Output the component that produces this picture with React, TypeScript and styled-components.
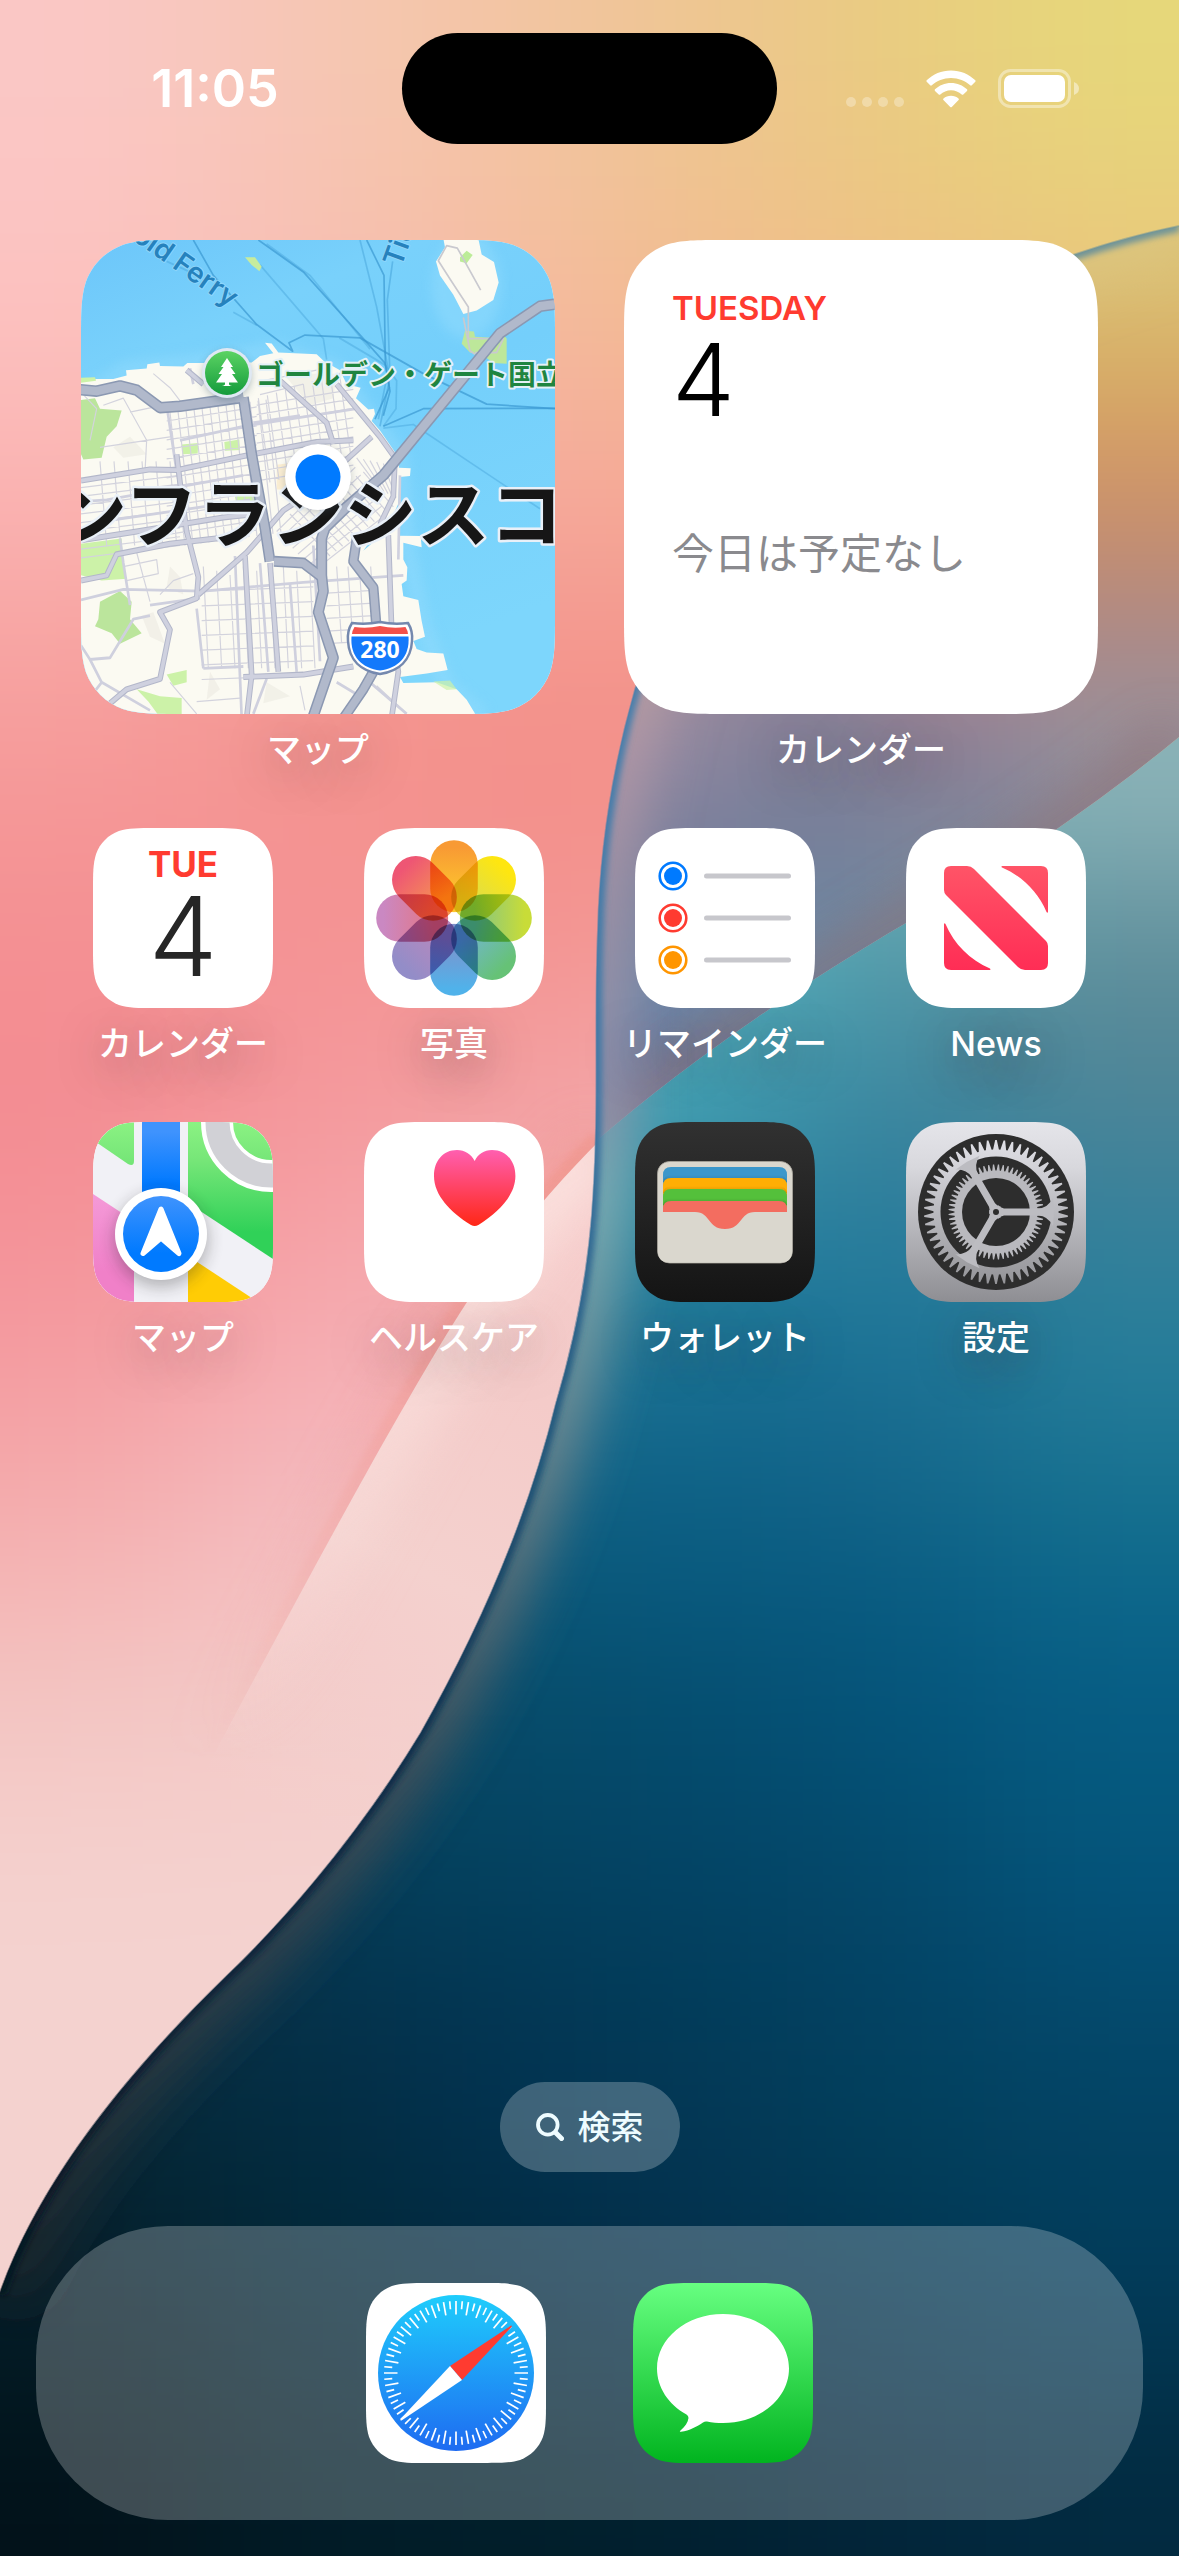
import React from "react";
import styled, { createGlobalStyle } from "styled-components";

const FONT = `"Inter", "Noto Sans CJK JP", sans-serif`;

const GlobalStyle = createGlobalStyle`
  *, *::before, *::after { box-sizing: border-box; }
  html, body { margin: 0; padding: 0; }
  body { font-family: ${FONT}; background: #02202e; -webkit-font-smoothing: antialiased; }
  button { font: inherit; color: inherit; border: 0; padding: 0; margin: 0; background: none; cursor: pointer; }
`;

/* Continuous-corner rounded rectangle */
function smoothRect(w: number, h: number, r: number): string {
  const a = r * 1.5287, b = r * 1.0885, c = r * 0.8684, d = r * 0.6315;
  const e = r * 0.3728, f = r * 0.1691, g = r * 0.0749;
  return [
    `M${a} 0H${w - a}`,
    `C${w - b} 0 ${w - c} 0 ${w - d} ${g}`,
    `C${w - e} ${f} ${w - f} ${e} ${w - g} ${d}`,
    `C${w} ${c} ${w} ${b} ${w} ${a}`,
    `V${h - a}`,
    `C${w} ${h - b} ${w} ${h - c} ${w - g} ${h - d}`,
    `C${w - f} ${h - e} ${w - e} ${h - f} ${w - d} ${h - g}`,
    `C${w - c} ${h} ${w - b} ${h} ${w - a} ${h}`,
    `H${a}`,
    `C${b} ${h} ${c} ${h} ${d} ${h - g}`,
    `C${e} ${h - f} ${f} ${h - e} ${g} ${h - d}`,
    `C0 ${h - c} 0 ${h - b} 0 ${h - a}`,
    `V${a}`,
    `C0 ${b} 0 ${c} ${g} ${d}`,
    `C${f} ${e} ${e} ${f} ${d} ${g}`,
    `C${c} 0 ${b} 0 ${a} 0Z`,
  ].join("");
}

/* ---------- page structure ---------- */

const Screen = styled.div`
  position: relative;
  isolation: isolate;
  overflow: hidden;
  min-height: 100vh;
  display: flex;
  flex-direction: column;
  padding-bottom: 36px;
`;

const WallpaperSvg = styled.svg`
  position: absolute;
  inset: 0;
  width: 100%;
  height: 100%;
  z-index: -1;
`;

const StatusBar = styled.header`
  display: grid;
  grid-template-columns: 1fr 375px 1fr;
  align-items: center;
  padding: 33px 28px 0;
  color: #fff;
`;

const Clock = styled.time`
  text-align: center;
  font-size: 52px;
  line-height: 60px;
  font-weight: 600;
`;

const Island = styled.div`
  height: 111px;
  border-radius: 56px;
  background: #000;
`;

const Indicators = styled.div`
  display: flex;
  justify-content: center;
  align-items: center;
  gap: 22px;
  padding-right: 4px;
`;

const Main = styled.main`
  display: flex;
  flex-direction: column;
  gap: 58px;
  padding-top: 96px;
`;

const WidgetRow = styled.section`
  display: flex;
  justify-content: space-between;
  padding: 0 81px;
`;

const AppGrid = styled.section`
  display: grid;
  grid-template-columns: repeat(4, 180px);
  justify-content: space-between;
  row-gap: 58px;
  padding: 0 93px;
`;

const Launcher = styled.button`
  display: flex;
  flex-direction: column;
  align-items: center;
  gap: 16px;
`;

const Label = styled.span`
  font-size: 34px;
  line-height: 40px;
  font-weight: 500;
  color: #fff;
  white-space: nowrap;
  text-shadow: 0 10px 44px rgba(70, 40, 50, 0.6);
`;

const Tile = styled.span<{ $bg?: string }>`
  display: block;
  width: 180px;
  height: 180px;
  background: ${(p) => p.$bg ?? "#fff"};
  clip-path: path("${smoothRect(180, 180, 41)}");

  svg { display: block; width: 100%; height: 100%; }
`;

const WidgetFace = styled.span`
  display: block;
  width: 474px;
  height: 474px;
  background: #fff;
  text-align: left;
  clip-path: path("${smoothRect(474, 474, 66)}");

  svg { display: block; }
`;

const DayWidget = styled.span`
  display: flex;
  flex-direction: column;
  padding: 48px;
`;

const Weekday = styled.span`
  font-size: 33px;
  line-height: 40px;
  font-weight: 600;
  color: #ff3b30;
`;

const DayNumber = styled.span`
  font-size: 100px;
  line-height: 104px;
  font-weight: 300;
  color: #000;
`;

const NoEvents = styled.span`
  margin-top: 92px;
  font-size: 42px;
  line-height: 60px;
  color: #8a8a8e;
`;

const CalendarFace = styled.span`
  display: flex;
  flex-direction: column;
  align-items: center;
  padding-top: 16px;
`;

const ShortDay = styled.span`
  font-size: 35px;
  line-height: 40px;
  font-weight: 700;
  color: #ff3b30;
`;

const BigDay = styled.span`
  font-size: 110px;
  line-height: 104px;
  font-weight: 300;
  color: #262626;
`;

const Bottom = styled.footer`
  margin-top: auto;
  display: flex;
  flex-direction: column;
  align-items: center;
  gap: 54px;
  padding: 0 36px;
`;

const SearchPill = styled.button`
  display: flex;
  align-items: center;
  justify-content: center;
  gap: 14px;
  width: 180px;
  height: 90px;
  border-radius: 45px;
  background: rgba(255, 255, 255, 0.24);
  color: #eefcff;
  font-size: 33px;
  line-height: 40px;
  font-weight: 500;
`;

const Dock = styled.nav`
  align-self: stretch;
  display: flex;
  justify-content: center;
  align-items: center;
  gap: 87px;
  height: 294px;
  border-radius: 132px;
  background: rgba(255, 255, 255, 0.24);
`;

/* ---------- wallpaper ---------- */

type FieldProps = { x: number; y: number; w: number; h: number; rows: string[]; blur: string };

/* A soft colour field: a coarse grid of swatches, blurred into each other */
function ColorField({ x, y, w, h, rows, blur }: FieldProps) {
  const rects: React.ReactNode[] = [];
  rows.forEach((row, j) => {
    const colors = row.split(" ");
    colors.forEach((c, i) => {
      const left = i === 0 ? x - 300 : x + i * w;
      const right = i === colors.length - 1 ? x + (i + 1) * w + 300 : x + (i + 1) * w + 1;
      const top = j === 0 ? y - 300 : y + j * h;
      const bottom = j === rows.length - 1 ? y + (j + 1) * h + 300 : y + (j + 1) * h + 1;
      rects.push(
        <rect key={`${i}-${j}`} x={left} y={top} width={right - left} height={bottom - top} fill={`#${c}`} />
      );
    });
  });
  return <g filter={`url(#${blur})`}>{rects}</g>;
}

const EDGE =
  "M1179 226C1140 234 1105 244 1073 255C850 335 690 500 635 690C612 770 600 850 598 930C594 1030 600 1110 592 1215C586 1290 572 1350 556 1404C530 1510 485 1620 421 1733C350 1850 270 1935 226 1977C130 2070 40 2180 0 2293";
const RIDGE = "M1179 737C1090 810 1000 870 906 923C800 985 690 1060 596 1141";
const LEFT_RIDGE = "M600 1140C550 1190 505 1245 467 1302C400 1405 280 1630 190 1800";

const ROSE = [
  "fac7c5 f6c6b5 f3c5a5 eec592 e9cb80 e6d77a",
  "fcc2c0 f8bfb4 f5bba2 f1bc8f eec084 e9c57c",
  "fab2b1 f8aca8 f6aa9d f4a897 f0b088 e9c07c",
  "f69f9d f3948f f29089 f48f89 f0a088 e9b07c",
  "f49193 f49293 f3928f f2938f f2938f f2938f",
  "f38b91 f4979b f39ea0 f2a8aa f2a8aa f2a8aa",
  "f4969c f5a7ac f4aeb3 f3b4b8 f3b4b8 f3b4b8",
  "f4abac f4bbbf f3bac2 f3c0c6 f3c0c6 f3c0c6",
  "f3c5c2 f3cac8 f4cfcc f4cfcc f4cfcc f4cfcc",
  "f4d2cf f4d2cf f4d2cf f4d2cf f4d2cf f4d2cf",
  "f4d2cf f4d2cf f4d2cf f4d2cf f4d2cf f4d2cf",
  "f4d2cf f4d2cf f4d2cf f4d2cf f4d2cf f4d2cf",
];

const DUSK = [
  "e0c880 e0c880 dec87c dcc478",
  "d8b878 d9b674 dab56c d8b268",
  "d0a078 d0a070 d69f66 d39a66",
  "b89088 b89084 c6906f c28c72",
  "a08c9c 988498 ac8890 a88a8c",
  "9088a0 7e7f98 8b7f96 96919b",
  "787e9b 757f9a 7c869a 868f9f",
  "7284a2 6c88a2 7090a4 809aa8",
  "6a86aa 5f8aac 6a90a8 6a90a8",
  "7c82a8 7c82a8 7c82a8 7c82a8",
];

const OCEAN = [
  "6fb8be 6fb8be 6fb8be 6fb8be 7ab4ba 8ab2b7",
  "6fb8be 6fb8be 6fb8be 62b4bd 60a4b0 6c9aa4",
  "60b4be 60b4be 60b4be 4dacbb 4b94a6 598a98",
  "4fa8b6 4fa8b6 4fa8b6 409db1 3b869f 4c8598",
  "3a90a6 3a90a6 3a90a6 328ca4 2c7c9b 3a819a",
  "30809a 30809a 30809a 20799a 20789a 2c7f9a",
  "20708f 20708f 20708f 146b8f 196c90 227a98",
  "0f6082 0f6082 0f6082 0d6085 126489 15708f",
  "0a5576 0a5576 0a5576 08587c 085a80 0c668a",
  "064c6a 064c6a 064c6a 054e70 05547a 065c84",
  "05445f 05445f 064664 04486a 044e72 05597d",
  "043a55 043a55 033f5c 034263 044768 04527a",
  "0a3246 06324a 033653 023c59 034264 044a6c",
  "062a3a 032c42 023250 033856 02405c 034466",
  "06222f 022a3c 022d46 033350 023a56 023f5e",
  "041d29 022534 022a40 022e48 02344f 023a58",
  "02171f 021f2b 022433 02283c 022c44 023149",
  "02121a 011b26 011e29 01202f 022539 022a40",
];

function Wallpaper() {
  return (
    <WallpaperSvg viewBox="0 0 1179 2556" preserveAspectRatio="none" aria-hidden="true">
      <defs>
        <filter id="soft" filterUnits="userSpaceOnUse" x="-300" y="-300" width="1779" height="3156" colorInterpolationFilters="sRGB">
          <feGaussianBlur stdDeviation="92" />
        </filter>
        <filter id="softSmall" filterUnits="userSpaceOnUse" x="300" y="0" width="1100" height="1500" colorInterpolationFilters="sRGB">
          <feGaussianBlur stdDeviation="50" />
        </filter>
        <filter id="softSea" filterUnits="userSpaceOnUse" x="-300" y="450" width="1779" height="2500" colorInterpolationFilters="sRGB">
          <feGaussianBlur stdDeviation="84 60" />
        </filter>
        <filter id="glow" filterUnits="userSpaceOnUse" x="-200" y="-100" width="1579" height="2756">
          <feGaussianBlur stdDeviation="26" />
        </filter>
        <filter id="thin" filterUnits="userSpaceOnUse" x="-200" y="-100" width="1579" height="2756">
          <feGaussianBlur stdDeviation="3" />
        </filter>
        <clipPath id="fold"><path d={`${EDGE}V2556H1179Z`} /></clipPath>
        <clipPath id="sea"><path d={`${RIDGE}L400 1310L-20 1700V2556H1179Z`} /></clipPath>
        <clipPath id="dusk"><path d={`${RIDGE}L500 1225V200H1179Z`} /></clipPath>
        <clipPath id="leftTop"><path d={`${LEFT_RIDGE}H0V900H700Z`} /></clipPath>
        <clipPath id="leftLow"><path d={`${LEFT_RIDGE}V2300H700V1140Z`} /></clipPath>
        <linearGradient id="pale" gradientUnits="userSpaceOnUse" x1="560" y1="1180" x2="260" y2="1800">
          <stop offset="0" stopColor="#f6cccb" />
          <stop offset="0.3" stopColor="#f4cbc9" />
          <stop offset="0.6" stopColor="#f4d1ce" />
          <stop offset="1" stopColor="#f4d2cf" stopOpacity="0" />
        </linearGradient>
        <linearGradient id="fadeDown" gradientUnits="userSpaceOnUse" x1="0" y1="1140" x2="0" y2="1760">
          <stop offset="0" stopColor="#fff" />
          <stop offset="0.45" stopColor="#fff" stopOpacity="0.6" />
          <stop offset="1" stopColor="#fff" stopOpacity="0" />
        </linearGradient>
        <mask id="fadeMask" maskUnits="userSpaceOnUse" x="0" y="0" width="1179" height="2556">
          <rect width="1179" height="2556" fill="url(#fadeDown)" />
        </mask>
        <linearGradient id="edgeLine" gradientUnits="userSpaceOnUse" x1="0" y1="226" x2="0" y2="2293">
          <stop offset="0" stopColor="#6f9498" />
          <stop offset="0.2" stopColor="#4a80ac" />
          <stop offset="0.42" stopColor="#3f78a6" />
          <stop offset="0.6" stopColor="#1f5478" />
          <stop offset="0.75" stopColor="#0c2c48" />
          <stop offset="1" stopColor="#06141f" />
        </linearGradient>
        <linearGradient id="edgeHaze" gradientUnits="userSpaceOnUse" x1="0" y1="226" x2="0" y2="2293">
          <stop offset="0" stopColor="#e0cc88" stopOpacity="0.4" />
          <stop offset="0.25" stopColor="#b498a6" stopOpacity="0.9" />
          <stop offset="0.42" stopColor="#9490a8" stopOpacity="0.8" />
          <stop offset="0.47" stopColor="#8fb4b6" stopOpacity="0.8" />
          <stop offset="0.58" stopColor="#7f8f92" stopOpacity="0.8" />
          <stop offset="0.75" stopColor="#4c5056" stopOpacity="0.8" />
          <stop offset="1" stopColor="#302e2e" stopOpacity="0.5" />
        </linearGradient>
      </defs>

      <ColorField x={0} y={0} w={197} h={200} rows={ROSE} blur="soft" />
      <g clipPath="url(#leftLow)">
        <rect y="1100" width="700" height="900" fill="url(#pale)" />
        <g mask="url(#fadeMask)">
          <path d={LEFT_RIDGE} fill="none" stroke="#fbe2df" strokeWidth="70" filter="url(#glow)" />
        </g>
      </g>
      <g clipPath="url(#leftTop)" mask="url(#fadeMask)">
        <path d={LEFT_RIDGE} fill="none" stroke="#ee8c7c" strokeWidth="22" filter="url(#thin)" opacity="0.35" />
        <path d={LEFT_RIDGE} fill="none" stroke="#ee8c7c" strokeWidth="30" filter="url(#glow)" opacity="0.5" />
      </g>

      <g clipPath="url(#fold)">
        <g clipPath="url(#dusk)">
          <ColorField x={590} y={200} w={147} h={100} rows={DUSK} blur="softSmall" />
          <path d={RIDGE} fill="none" stroke="#90686c" strokeWidth="36" filter="url(#glow)" opacity="0.7" />
        </g>
        <g clipPath="url(#sea)">
          <ColorField x={0} y={750} w={197} h={100} rows={OCEAN} blur="softSea" />
        </g>
        <path d={EDGE} fill="none" stroke="url(#edgeHaze)" strokeWidth="70" filter="url(#glow)" />
        <path d={EDGE} fill="none" stroke="url(#edgeLine)" strokeWidth="11" filter="url(#thin)" />
      </g>
      <path d={EDGE} fill="none" stroke="url(#edgeLine)" strokeWidth="2" opacity="0.5" />
    </WallpaperSvg>
  );
}

/* ---------- status icons ---------- */

function SignalDots() {
  return (
    <svg width="58" height="40" viewBox="0 0 58 40" aria-hidden="true">
      {[5, 21, 37, 53].map((x) => <circle key={x} cx={x} cy="33" r="5" fill="#fff" opacity="0.3" />)}
    </svg>
  );
}

function WifiIcon() {
  return (
    <svg width="50" height="38" viewBox="0 0 50 38" role="img" aria-label="Wi-Fi">
      <g fill="#fff">
        <path d="M25 0.500C34.500 0.500 43 4.200 49.300 10.300Q50 11 49.300 11.800L45.800 15.300Q45 16 44.200 15.300C39.200 10.700 32.500 7.900 25 7.900C17.500 7.900 10.800 10.700 5.800 15.300Q5 16 4.200 15.300L0.700 11.800Q0 11 0.700 10.300C7 4.200 15.500 0.500 25 0.500Z" />
        <path d="M25 13C31.200 13 36.800 15.400 41 19.300Q41.800 20.100 41 20.900L37.300 24.500Q36.500 25.200 35.700 24.500C32.900 21.900 29.100 20.300 25 20.300C20.900 20.300 17.100 21.900 14.300 24.500Q13.500 25.200 12.700 24.500L9 20.900Q8.200 20.100 9 19.300C13.200 15.400 18.800 13 25 13Z" />
        <path d="M25 25.700C27.900 25.700 30.500 26.700 32.500 28.400Q33.400 29.200 32.600 30L25.800 36.900Q25 37.700 24.200 36.900L17.400 30Q16.600 29.200 17.500 28.400C19.500 26.700 22.100 25.700 25 25.700Z" />
      </g>
    </svg>
  );
}

function BatteryIcon() {
  return (
    <svg width="81" height="39" viewBox="0 0 81 39" role="img" aria-label="Battery">
      <rect x="1.500" y="1.500" width="70" height="36" rx="11" fill="none" stroke="#fff" strokeWidth="3" opacity="0.4" />
      <rect x="6" y="6" width="61" height="27" rx="7" fill="#fff" />
      <path d="M76 13Q81 15 81 19.500T76 26Z" fill="#fff" opacity="0.45" />
    </svg>
  );
}

/* ---------- app icons ---------- */

const Petal = styled.g`
  mix-blend-mode: multiply;
`;

const PETALS: [string, string][] = [
  ["#f89a34", "#fdc72e"],
  ["#fee610", "#dadc50"],
  ["#c8dc38", "#84c584"],
  ["#66c276", "#72b6d0"],
  ["#50b2ea", "#8091cb"],
  ["#938dc8", "#b888bd"],
  ["#ca88c2", "#e47684"],
  ["#ee5674", "#f69552"],
];

function PhotosIcon() {
  return (
    <svg viewBox="0 0 180 180" aria-hidden="true">
      <defs>
        {PETALS.map(([outer, inner], i) => (
          <linearGradient key={i} id={`petal${i}`} x1="0" y1="0" x2="0" y2="1">
            <stop offset="0.1" stopColor={outer} />
            <stop offset="0.8" stopColor={inner} />
          </linearGradient>
        ))}
      </defs>
      <rect width="180" height="180" fill="#fff" />
      {PETALS.map((_, i) => (
        <Petal key={i} transform={`rotate(${i * 45} 90 90)`}>
          <rect x="66.200" y="12.200" width="47.600" height="72" rx="23.800" fill={`url(#petal${i})`} />
        </Petal>
      ))}
      <circle cx="90" cy="90" r="5.500" fill="#fff" />
    </svg>
  );
}

function RemindersIcon() {
  return (
    <svg viewBox="0 0 180 180" aria-hidden="true">
      {["#007aff", "#ff3b30", "#ff9500"].map((c, i) => {
        const y = 48 + i * 42;
        return (
          <g key={c}>
            <circle cx="38" cy={y} r="13.300" fill="none" stroke={c} strokeWidth="2.600" />
            <circle cx="38" cy={y} r="9" fill={c} />
            <path d={`M71.500 ${y}H153.500`} stroke="#c7c7cc" strokeWidth="5" strokeLinecap="round" />
          </g>
        );
      })}
    </svg>
  );
}

function NewsIcon() {
  return (
    <svg viewBox="0 0 180 180" aria-hidden="true">
      <defs>
        <linearGradient id="news" gradientUnits="userSpaceOnUse" x1="0" y1="38" x2="0" y2="142">
          <stop offset="0" stopColor="#ff5467" />
          <stop offset="1" stopColor="#ff2d55" />
        </linearGradient>
      </defs>
      <g fill="url(#news)">
        <path d="M45 38H61Q65 38 68 41L140 113Q142 115 142 118V135Q142 142 135 142H119Q115 142 112 139L40 67Q38 65 38 62V45Q38 38 45 38Z" />
        <path d="M96 38H135Q142 38 142 45V84Q141.500 85.500 140.500 84C132 64 116 48 96 39.500Q95 38.500 96 38Z" />
        <path d="M84 142H45Q38 142 38 135V96Q38.500 94.500 39.500 96C48 116 64 132 84 140.500Q85 141.500 84 142Z" />
      </g>
    </svg>
  );
}

function MapsIcon() {
  return (
    <svg viewBox="0 0 180 180" aria-hidden="true">
      <defs>
        <linearGradient id="mGreen" gradientUnits="userSpaceOnUse" x1="0" y1="0" x2="0" y2="110">
          <stop offset="0" stopColor="#8bf283" />
          <stop offset="0.35" stopColor="#76e678" />
          <stop offset="1" stopColor="#30d158" />
        </linearGradient>
        <linearGradient id="mBlue" gradientUnits="userSpaceOnUse" x1="0" y1="0" x2="0" y2="66">
          <stop offset="0.15" stopColor="#3f93fd" />
          <stop offset="0.95" stopColor="#0079ff" />
        </linearGradient>
        <linearGradient id="mDisc" gradientUnits="userSpaceOnUse" x1="0" y1="74" x2="0" y2="150">
          <stop offset="0" stopColor="#3f93fd" />
          <stop offset="0.75" stopColor="#007aff" />
        </linearGradient>
        <linearGradient id="mPink" gradientUnits="userSpaceOnUse" x1="0" y1="72" x2="0" y2="150">
          <stop offset="0" stopColor="#f49ad8" />
          <stop offset="1" stopColor="#f080c8" />
        </linearGradient>
        <filter id="mShadow" x="-40%" y="-40%" width="180%" height="180%">
          <feGaussianBlur stdDeviation="8" />
        </filter>
        <clipPath id="mRight"><path d="M95 0H180V137L95 81Z" /></clipPath>
      </defs>
      <rect width="180" height="180" fill="#f1f1f6" />
      <path d="M0 18V0H41V39Q41 45 35 42Z" fill="url(#mGreen)" />
      <path d="M0 72L41 99V180H0Z" fill="url(#mPink)" />
      <path d="M95 134L165 180H95Z" fill="#ffcc05" />
      <path d="M95 0H180V137L95 81Z" fill="url(#mGreen)" />
      <g clipPath="url(#mRight)" fill="none">
        <circle cx="178" cy="0" r="54" stroke="#fff" strokeWidth="32" />
        <circle cx="178" cy="0" r="53.500" stroke="#d1d1d6" strokeWidth="24" />
      </g>
      <rect x="49" width="38" height="90" fill="url(#mBlue)" />
      <circle cx="68" cy="118" r="47" fill="#222" opacity="0.3" filter="url(#mShadow)" />
      <circle cx="68" cy="112" r="46" fill="#fff" />
      <circle cx="68" cy="112" r="38" fill="url(#mDisc)" />
      <path d="M68 87L50 131.500L68 116L86 131.500Z" fill="#fff" stroke="#fff" strokeWidth="5" strokeLinejoin="round" />
    </svg>
  );
}

function HealthIcon() {
  return (
    <svg viewBox="0 0 180 180" aria-hidden="true">
      <defs>
        <linearGradient id="heart" gradientUnits="userSpaceOnUse" x1="0" y1="28" x2="0" y2="104">
          <stop offset="0" stopColor="#ff5fb0" />
          <stop offset="1" stopColor="#ff2716" />
        </linearGradient>
      </defs>
      <path
        d="M110.700 39C107 32 101 28 93 28C79 28 70 39 70 54C70 73 86 90 107 103Q110.700 105 114.400 103C135 90 151.400 73 151.400 54C151.400 39 142 28 128 28C120 28 114 32 110.700 39Z"
        fill="url(#heart)"
      />
    </svg>
  );
}

function WalletIcon() {
  const cards = [["#3b97cb", 45], ["#ffae04", 56], ["#54c03b", 67], ["#f36d60", 79]] as const;
  return (
    <svg viewBox="0 0 180 180" aria-hidden="true">
      <defs>
        <linearGradient id="wShade" x1="0" y1="0" x2="0" y2="1">
          <stop offset="0" stopColor="#000" stopOpacity="0" />
          <stop offset="1" stopColor="#000" stopOpacity="0.35" />
        </linearGradient>
      </defs>
      <rect x="22.500" y="39.500" width="135" height="101.500" rx="12" fill="#dad7ce" stroke="#a9a69d" strokeWidth="0.800" />
      {cards.map(([c, y], i) => (
        <g key={c}>
          {i > 0 && <path d={`M28 ${y + 4}Q29 ${y - 3} 36 ${y - 3}H144Q151 ${y - 3} 152 ${y + 4}Z`} fill="url(#wShade)" opacity="0.5" />}
          <path d={`M28 ${y + 8}Q28 ${y} 36 ${y}H144Q152 ${y} 152 ${y + 8}V112H28Z`} fill={c} />
        </g>
      ))}
      <path d="M23 90H60C76 90 72 107 90 107C108 107 104 90 120 90H157V129Q157 140.500 145.500 140.500H34.500Q23 140.500 23 129Z" fill="#dad7ce" />
    </svg>
  );
}

function gearPath(n: number, tip: number, base: number, tipHalf: number, baseHalf: number): string {
  let d = "";
  for (let i = 0; i < n; i++) {
    const mid = ((i + 0.5) / n) * Math.PI * 2;
    const pts: [number, number][] = [[base, -baseHalf], [tip, -tipHalf], [tip, tipHalf], [base, baseHalf]];
    pts.forEach(([r, off], k) => {
      const a = mid + off / r;
      d += `${i === 0 && k === 0 ? "M" : "L"}${(90 + r * Math.cos(a)).toFixed(2)} ${(90 + r * Math.sin(a)).toFixed(2)}`;
    });
  }
  return d + "Z";
}

function SettingsIcon() {
  return (
    <svg viewBox="0 0 180 180" aria-hidden="true">
      <defs>
        <linearGradient id="metal" gradientUnits="userSpaceOnUse" x1="0" y1="18" x2="0" y2="162">
          <stop offset="0" stopColor="#e0e0e6" />
          <stop offset="1" stopColor="#949498" />
        </linearGradient>
      </defs>
      <circle cx="90" cy="90" r="78" fill="#2d2d2d" />
      <path d={gearPath(54, 72, 62.5, 0.8, 2.9)} fill="url(#metal)" />
      <circle cx="90" cy="90" r="55.500" fill="#2d2d2d" />
      <path d={gearPath(60, 47.500, 41.500, 0.6, 1.6)} fill="#b9b9be" />
      <circle cx="90" cy="90" r="34" fill="#2d2d2d" />
      {[0, 120, 240].map((a) => (
        <g key={a} transform={`rotate(${a} 90 90)`} fill="#bcbcc1">
          <path d="M98 86.500H132Q142 86 147 76L148 90L147 104Q142 94 132 93.500H98Q94 94 92 97L88 90L92 83Q94 86 98 86.500Z" />
        </g>
      ))}
      <circle cx="90" cy="90" r="6" fill="#bcbcc1" />
      <circle cx="90" cy="90" r="3" fill="#2d2d2d" />
    </svg>
  );
}

function SafariIcon() {
  return (
    <svg viewBox="0 0 180 180" aria-hidden="true">
      <defs>
        <linearGradient id="safari" x1="0" y1="0" x2="0" y2="1">
          <stop offset="0" stopColor="#1fcdfc" />
          <stop offset="1" stopColor="#1e6bf1" />
        </linearGradient>
      </defs>
      <circle cx="90" cy="90" r="78" fill="url(#safari)" />
      <g stroke="#fff" strokeWidth="1.700">
        {Array.from({ length: 72 }, (_, i) => (
          <path key={i} d={i % 2 === 0 ? "M90 18V31.500" : "M90 18V26"} transform={`rotate(${i * 5} 90 90)`} />
        ))}
      </g>
      <path d="M84 83L145 42.500Q146.300 42.500 145.500 44L96 97Z" fill="#ff3b30" />
      <path d="M84 83L34.500 136Q34 138 35.500 137.500L96 97Z" fill="#fff" />
    </svg>
  );
}

function MessagesIcon() {
  return (
    <svg viewBox="0 0 180 180" aria-hidden="true">
      <path
        d="M90 31C126.500 31 156 55.600 156 85.500C156 115.600 126.500 140 90 140C84.500 140 79 139.500 74 138.500Q72 138 70 139.500C63 144 57 147.500 48 148.800Q46 149 47.500 147.500C52 143.500 55 139.500 55.500 135Q55.500 132.500 53.500 131.500C35.500 121.500 24 104.500 24 85.500C24 55.600 53.500 31 90 31Z"
        fill="#fff"
      />
    </svg>
  );
}

function SearchGlyph() {
  return (
    <svg width="28" height="28" viewBox="0 0 28 28" fill="none" stroke="currentColor" strokeLinecap="round" aria-hidden="true">
      <circle cx="11.800" cy="11.800" r="9.800" strokeWidth="3.800" />
      <path d="M20 20L25.500 25.500" strokeWidth="5" />
    </svg>
  );
}

/* ---------- map widget ---------- */

const HIGHWAYS: [string, number][] = [
  ["M20 455L80 460L150 445L200 457L270 507L330 503L500 480L520 478", 30],
  ["M520 478L545 640L585 850L600 945", 30],
  ["M612 945L700 950L755 990", 28],
  ["M1470 210L1410 218L1290 295L940 700L830 790L765 850L755 880L755 985L760 1030L745 1090L790 1220L725 1400", 30],
  ["M862 870L850 945L910 1020L920 1140", 28],
  ["M910 1260L880 1310L815 1400", 28],
];

const ARTERIALS = [
  "M33 715L240 683L320 685L520 645L740 605L850 600",
  "M33 885L200 860L460 820L560 810",
  "M33 1000L110 985L140 925L300 895L530 870",
  "M320 640L330 720L350 860L385 990L380 1050L270 1090L300 1140L270 1280L170 1310L120 1350",
  "M385 1040L530 920L640 800L720 750",
  "M630 430L770 550L790 610",
  "M800 440L930 590L975 650L970 760L930 840",
  "M600 950L625 1260",
  "M525 930L545 1270L530 1390",
  "M520 1275L700 1268L850 1245",
  "M955 870L965 1140L985 1260L965 1390",
  "M720 750L905 590",
  "M350 400L400 440",
];

const STREETS = [
  "M33 1055L160 1025L400 1030L700 1005L1000 985",
  "M33 775L110 770L520 700",
  "M110 830L540 770",
  "M290 500L320 690",
  "M330 600L520 560L860 510",
  "M550 550L690 530",
  "M33 1185L60 1225L120 1220L190 1110L240 1100",
  "M60 1225L95 1290L30 1370M95 1290L240 1370",
  "M240 1070L390 1050",
  "M180 1070L160 950L150 880",
  "M360 395L370 440",
  "M730 900L750 1230",
  "M380 1080L400 1250M400 1250L520 1245",
  "M900 1290L1010 1380M800 1290L870 1330",
  "M590 1280L550 1380",
  "M990 700L985 940",
  "M495 930L515 1390",
  "M570 950L595 1260",
  "M660 1010L680 1260",
];

const FERRIES = [
  ["M370 29L430 130L560 270L668 346L657 322L705 300L870 308L1060 410L1250 497L1455 510", 0.7],
  ["M565 29L700 120L880 310L945 380L958 450L915 540", 0.7],
  ["M890 29L942 130L946 380L960 460L940 530", 0.7],
  ["M870 29L920 220L955 400L925 540", 0.4],
  ["M968 90L952 200L960 420L930 560", 0.45],
  ["M940 560L1060 510L1455 509", 0.7],
  ["M570 100L760 310L770 370", 0.35],
  ["M808 308L945 385L980 430L978 510L940 560", 0.35],
  ["M590 40L720 130L900 340", 0.35],
  ["M940 565L1030 555L1290 720L1410 795", 0.35],
  ["M490 235L560 272M290 90L360 120", 0.35],
] as const;

function streetGrid(): string {
  let d = "";
  for (let i = 0; i < 13; i++) d += `M${300 + i * 24} ${520 - i * 3}L${345 + i * 24} ${900 - i * 3}`;
  for (let i = 0; i < 14; i++) d += `M${290} ${545 + i * 27}L${560} ${505 + i * 27}`;
  for (let i = 0; i < 9; i++) d += `M${560} ${500 + i * 27}L${850} ${455 + i * 27}`;
  for (let i = 0; i < 10; i++) d += `M${565 + i * 27} ${480 - i * 8}L${600 + i * 27} ${720 - i * 8}`;
  for (let i = 0; i < 11; i++) d += `M${660 + i * 22} ${720 - i * 12 + 90}L${780 + i * 19} ${930 - i * 14}`;
  for (let i = 0; i < 8; i++) d += `M${620 + i * 16} ${860 + i * 16}L${840 + i * 16} ${655 + i * 22}`;
  for (let i = 0; i < 9; i++) d += `M${400 + i * 40} ${960 + (i % 3) * 12}L${415 + i * 40} 1250`;
  for (let i = 0; i < 7; i++) d += `M395 ${1030 + i * 42}L730 ${1018 + i * 42}`;
  for (let i = 0; i < 6; i++) d += `M770 ${1000 + i * 36}L910 ${992 + i * 36}`;
  for (let i = 0; i < 4; i++) d += `M${800 + i * 34} 960L${815 + i * 34} 1180`;
  for (let i = 0; i < 9; i++) d += `M33 ${735 + i * 25}L330 ${700 + i * 25}`;
  for (let i = 0; i < 6; i++) d += `M${90 + i * 42} 660L${110 + i * 42} 900`;
  for (let i = 0; i < 5; i++) d += `M${860 + i * 20} ${650 + i * 4}L${930 + i * 12} ${740 + i * 6}`;
  d += "M40 470L80 510L60 600M100 500L160 480L230 600L225 690M180 520L280 500M90 620L300 590M250 410L300 450L340 500";
  d += "M160 960L260 940L265 980L170 1000M200 920L240 1060M270 1040L310 1000L370 980M300 1290L380 1380M380 1345L510 1335";
  d += "M580 430L740 400M570 470L700 440M690 1300L705 1370M920 1300L1000 1370";
  return d;
}

const MapText = styled.text`
  font-family: ${FONT};
  font-weight: 700;
  paint-order: stroke;
  stroke-linejoin: round;
`;

const FerryText = styled(MapText)`
  font-size: 28px;
  font-weight: 600;
  fill: #2682bd;
  stroke: #8fd6fb;
  stroke-width: 2px;
`;

const ParkText = styled(MapText)`
  font-size: 28px;
  fill: #1f8540;
  stroke: #e4f1f7;
  stroke-width: 4px;
`;

const CityText = styled(MapText)`
  font-size: 73px;
  fill: #161616;
  stroke: #e9f0f8;
  stroke-width: 5px;
`;

const ShieldText = styled.text`
  font-family: "Noto Sans", sans-serif;
  font-size: 23px;
  font-weight: 700;
  fill: #fff;
  text-anchor: middle;
`;

function MapDrawing() {
  return (
    <svg width="474" height="474" viewBox="0 0 474 474" role="img" aria-label="サンフランシスコの地図">
      <defs>
        <linearGradient id="water" x1="0" y1="0" x2="0.4" y2="1">
          <stop offset="0" stopColor="#6cc6fa" />
          <stop offset="0.25" stopColor="#79d1fb" />
          <stop offset="0.5" stopColor="#74cffb" />
          <stop offset="1" stopColor="#7dd6fc" />
        </linearGradient>
        <linearGradient id="park" x1="0" y1="0" x2="0" y2="1">
          <stop offset="0" stopColor="#5bd363" />
          <stop offset="1" stopColor="#149b3c" />
        </linearGradient>
        <filter id="shore" x="-20%" y="-20%" width="140%" height="140%"><feGaussianBlur stdDeviation="16" /></filter>
        <filter id="pinShadow" x="-40%" y="-40%" width="180%" height="180%"><feGaussianBlur stdDeviation="4" /></filter>
      </defs>
      <rect width="474" height="474" fill="url(#water)" />
      <g transform="matrix(0.33333 0 0 0.35076 -11 -10.172)" strokeLinejoin="round">
        <path d="M33 480L170 400L400 375L620 345L800 400L990 650L1010 900L1060 1130L1130 1300L1240 1390" fill="none" stroke="#8fdafd" strokeWidth="50" filter="url(#shore)" opacity="0.6" />
        <ellipse cx="1190" cy="160" rx="105" ry="150" fill="#8edafd" filter="url(#shore)" opacity="0.6" />
        {FERRIES.map(([d, o]) => <path key={d} d={d} fill="none" stroke="#3a98d2" strokeWidth="5" opacity={o} />)}
        <path
          d="M33 430L80 425L130 425L170 415L168 400L230 395L232 383L268 378L270 388L340 390L352 380L395 380L545 378L570 360L610 352L585 322L605 324L625 350L740 355L762 375L810 400L830 440L872 450L858 480L895 512L912 510L915 525L905 545L930 572L972 630L985 650L987 678L1022 680L1020 702L988 705L985 780L962 830L990 835L985 872L1052 873L1055 905L1000 892L1000 940L1012 962L1010 1000L995 1010L1000 1045L1045 1055L1055 1115L1065 1160L1030 1172L1040 1195L1070 1205L1120 1208L1133 1255L1070 1265L990 1275L1000 1292L1100 1290L1160 1310L1190 1340L1222 1390H20V430Z"
          fill="#fbfaf2"
        />
        <path d="M935 870L880 915L895 895L920 872Z" fill="#7bd3fb" />
        <path d="M1120 25H1225L1235 70L1272 92L1286 150L1270 200L1220 230L1180 240L1150 185L1110 130L1098 90L1125 50Z" fill="#fbfaf2" />
        <path d="M1185 288L1212 290L1215 305L1260 308L1285 283L1310 310V382L1270 380L1240 358L1200 350L1175 325Z" fill="#bde79a" />
        <path d="M1170 78L1190 60L1208 72L1190 95L1170 90Z" fill="#bcec98" />
        <path d="M525 78H555L575 105L568 118L545 100Z" fill="#c7ec9d" />
        <g fill="#bbe59c">
          <path d="M33 485L75 480L90 510L155 515L140 560L110 590L95 650L40 655L33 640Z" />
          <path d="M90 1060L150 1030L185 1060L180 1110L215 1150L150 1180L125 1150L75 1130L85 1110Z" />
        </g>
        <g fill="#ccf2a8">
          <path d="M33 895L155 880L160 960L170 995L95 1000L33 985Z" />
          <path d="M335 612L385 608L383 638L338 640Z" />
          <path d="M463 605L508 598L510 628L465 630Z" />
          <path d="M200 1310L270 1330L335 1335V1390H270L235 1345Z" />
          <path d="M290 1268L350 1255V1290L310 1300Z" />
          <path d="M33 422L75 420L78 430L33 436Z" />
          <path d="M1090 1288L1140 1285L1160 1310L1130 1312Z" opacity="0.7" />
          <path d="M495 760L560 745L565 780L500 785Z" />
        </g>
        <g fill="#eeece4" opacity="0.7">
          <path d="M130 620L180 590L230 640L160 650Z" />
          <path d="M215 1100L250 1090L285 1180L240 1160Z" />
          <path d="M300 960L330 990L340 1040L290 1020Z" />
          <path d="M420 1260L450 1310L410 1340Z" />
          <path d="M590 1290L660 1330L580 1350Z" />
          <path d="M640 410L800 410L790 480L720 500Z" />
        </g>
        <path d="M620 670L700 660V740L620 740Z" fill="#fbe8c4" opacity="0.7" />
        <path d={streetGrid()} fill="none" stroke="#d3d3dd" strokeWidth="3.500" />
        <g fill="none" stroke="#cfd0de" strokeWidth="8">{STREETS.map((d) => <path key={d} d={d} />)}</g>
        <g fill="none" stroke="#b3b7ca" strokeWidth="17">{ARTERIALS.map((d) => <path key={d} d={d} />)}</g>
        <g fill="none" stroke="#cfd1df" strokeWidth="11">{ARTERIALS.map((d) => <path key={d} d={d} />)}</g>
        <path d="M1180 250L1200 345L1215 355M1195 240V220L1140 140L1105 88L1130 45L1162 52L1232 172M1195 240V310H1300L1280 350H1215" fill="none" stroke="#c9c9cf" strokeWidth="5" />
        <g fill="none" stroke="#8b98b2">{HIGHWAYS.map(([d, w]) => <path key={d} d={d} strokeWidth={w + 3} />)}</g>
        <g fill="none" stroke="#b1b9cb">{HIGHWAYS.map(([d, w]) => <path key={d} d={d} strokeWidth={w - 6} />)}</g>
      </g>

      <FerryText transform="translate(33 -13) rotate(35)">Gold Ferry</FerryText>
      <FerryText transform="translate(320 28) rotate(-70)">Tid</FerryText>

      <circle cx="146" cy="136" r="24" fill="#356" opacity="0.4" filter="url(#pinShadow)" />
      <circle cx="146" cy="133" r="25" fill="#dfe8f3" />
      <circle cx="146" cy="133" r="22" fill="url(#park)" />
      <path d="M146 118L152 127H149.500L154.500 134H151L157 142.500H148V144.500Q149 145.500 151 146H141Q143 145.500 144 144.500V142.500H135L141 134H137.500L142.500 127H140Z" fill="#fff" />
      <ParkText x="175" y="145">ゴールデン・ゲート国立</ParkText>

      <CityText x="-27" y="301">ンフランシスコ</CityText>

      <circle cx="237" cy="239" r="33" fill="#456" opacity="0.3" filter="url(#pinShadow)" />
      <circle cx="237" cy="237" r="33" fill="#fff" />
      <circle cx="237" cy="237" r="22.500" fill="#007aff" />

      <path d="M271 383Q285 385 299 382Q313 385 327 383Q332 391 331 401C330 420 318 431 299 434C280 431 268 420 267 401Q266 391 271 383Z" fill="#fff" stroke="#7488ae" strokeWidth="2.500" />
      <path d="M273.500 387Q286 389 299 386Q312 389 324.500 387Q327 391 327 394H271Q271 391 273.500 387Z" fill="#f4504a" />
      <path d="M270.500 396.500H327.500C329 417 317 428 299 430.500C281 428 269 417 270.500 396.500Z" fill="#1379fb" />
      <ShieldText x="299" y="418">280</ShieldText>
    </svg>
  );
}

/* ---------- screen ---------- */

type AppEntry = { name: string; face: React.ReactNode; bg?: string };

const APPS: AppEntry[] = [
  {
    name: "カレンダー",
    face: (
      <CalendarFace>
        <ShortDay>TUE</ShortDay>
        <BigDay>4</BigDay>
      </CalendarFace>
    ),
  },
  { name: "写真", face: <PhotosIcon /> },
  { name: "リマインダー", face: <RemindersIcon /> },
  { name: "News", face: <NewsIcon /> },
  { name: "マップ", face: <MapsIcon /> },
  { name: "ヘルスケア", face: <HealthIcon /> },
  { name: "ウォレット", face: <WalletIcon />, bg: "linear-gradient(#313131, #141414)" },
  { name: "設定", face: <SettingsIcon />, bg: "linear-gradient(#e5e5ea, #d8d8dd 25%, #8e8e93)" },
];

export default function App() {
  return (
    <>
      <GlobalStyle />
      <Screen lang="ja">
        <Wallpaper />
        <StatusBar>
          <Clock dateTime="11:05">11:05</Clock>
          <Island />
          <Indicators>
            <SignalDots />
            <WifiIcon />
            <BatteryIcon />
          </Indicators>
        </StatusBar>

        <Main>
          <WidgetRow>
            <Launcher type="button">
              <WidgetFace><MapDrawing /></WidgetFace>
              <Label>マップ</Label>
            </Launcher>
            <Launcher type="button">
              <WidgetFace>
                <DayWidget>
                  <Weekday>TUESDAY</Weekday>
                  <DayNumber>4</DayNumber>
                  <NoEvents>今日は予定なし</NoEvents>
                </DayWidget>
              </WidgetFace>
              <Label>カレンダー</Label>
            </Launcher>
          </WidgetRow>

          <AppGrid>
            {APPS.map((app) => (
              <Launcher type="button" key={app.name}>
                <Tile $bg={app.bg}>{app.face}</Tile>
                <Label>{app.name}</Label>
              </Launcher>
            ))}
          </AppGrid>
        </Main>

        <Bottom>
          <SearchPill type="button">
            <SearchGlyph />
            検索
          </SearchPill>
          <Dock aria-label="Dock">
            <Launcher type="button" aria-label="Safari">
              <Tile><SafariIcon /></Tile>
            </Launcher>
            <Launcher type="button" aria-label="メッセージ">
              <Tile $bg="linear-gradient(#67ff81, #01b41f)"><MessagesIcon /></Tile>
            </Launcher>
          </Dock>
        </Bottom>
      </Screen>
    </>
  );
}
